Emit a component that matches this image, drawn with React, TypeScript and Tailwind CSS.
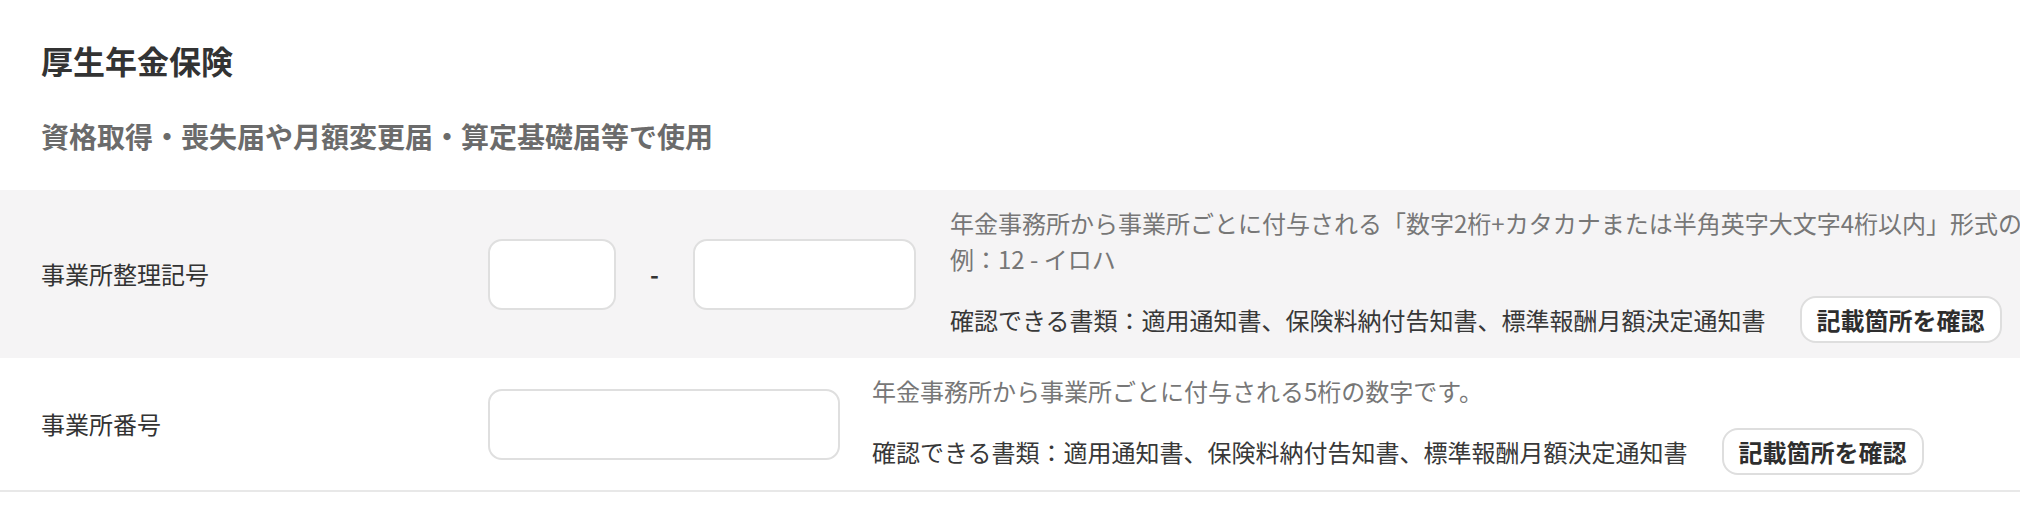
const FONT = "font-['Noto_Sans_CJK_JP','Noto_Sans',sans-serif]"

function CheckButton() {
  return (
    <button className="ml-[34px] h-[47px] shrink-0 rounded-[16px] border-2 border-[#dedede] bg-white px-[15px] text-[24px] leading-none font-bold text-[#2e2e2e]">
      記載箇所を確認
    </button>
  )
}

function Documents() {
  return (
    <div className="mt-[19px] flex items-center">
      <span className="text-[#383838]">確認できる書類：適用通知書、保険料納付告知書、標準報酬月額決定通知書</span>
      <CheckButton />
    </div>
  )
}

function TextInput({ width }: { width: string }) {
  return (
    <input
      type="text"
      className={`${width} h-[71px] shrink-0 rounded-[14px] border-2 border-[#dfdfdf] bg-white px-3 text-[24px] outline-none`}
    />
  )
}

export default function App() {
  return (
    <div className={`min-h-[518px] overflow-hidden bg-white text-[#333] ${FONT}`}>
      <div className="pl-[41px] pt-[40px]">
        <h2 className="text-[32px] leading-[40px] font-bold text-[#333]">厚生年金保険</h2>
        <p className="mt-[38px] text-[28px] leading-[36px] font-bold text-[#6b6b6b]">
          資格取得・喪失届や月額変更届・算定基礎届等で使用
        </p>
      </div>

      <div className="mt-[36px]">
        <div className="flex items-center bg-[#f5f4f5] py-[15px] pl-[41px] text-[24px] leading-[36px] whitespace-nowrap">
          <div className="w-[447px] shrink-0 text-[#333]">事業所整理記号</div>
          <div className="flex shrink-0 items-center">
            <TextInput width="w-[128px]" />
            <span className="w-[77px] text-center font-bold text-[#333]">-</span>
            <TextInput width="w-[223px]" />
          </div>
          <div className="ml-[34px] shrink-0">
            <p className="text-[#777]">
              年金事務所から事業所ごとに付与される「数字2桁+カタカナまたは半角英字大文字4桁以内」形式の記号です。
            </p>
            <p className="text-[#777]">例：12 - イロハ</p>
            <Documents />
          </div>
        </div>

        <div className="flex items-center border-b-2 border-[#e8e8e8] py-[15px] pl-[41px] text-[24px] leading-[36px] whitespace-nowrap">
          <div className="w-[447px] shrink-0 text-[#333]">事業所番号</div>
          <TextInput width="w-[352px]" />
          <div className="ml-[32px] shrink-0">
            <p className="text-[#777]">年金事務所から事業所ごとに付与される5桁の数字です。</p>
            <Documents />
          </div>
        </div>
      </div>
    </div>
  )
}
